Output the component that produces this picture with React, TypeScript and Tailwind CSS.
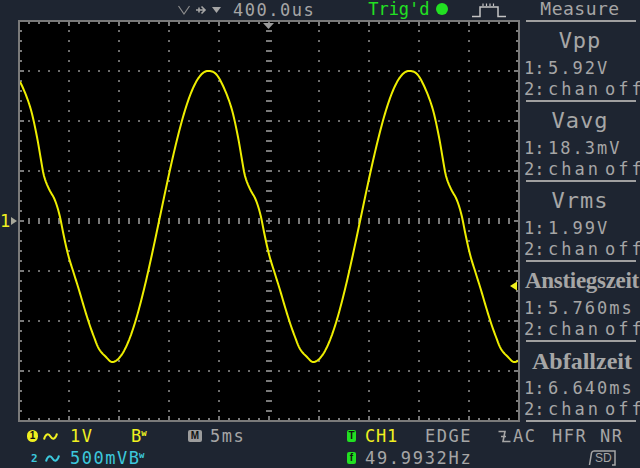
const YEL = "#f0f020";
const CYAN = "#3cc8dc";
const GREEN = "#22e022";

// falling edge of one period, screen coords (x, y)
const FALL: [number, number][] = [
  [208, 71], [216, 74], [224, 88], [232, 110], [238, 137], [242, 160], [245, 176],
  [250, 189], [255, 198], [258, 206], [261, 217], [264, 232], [267, 246], [270, 258],
  [275, 274], [280, 290], [285, 307], [290, 323], [295, 337], [300, 349], [307, 357], [313, 362],
];

function wave(x: number) {
  const P = 201;
  const t = (((x - 112) % P) + P) % P + 112;
  if (t <= 208) return 216.5 + 145.5 * Math.cos((Math.PI * (t - 112)) / 96);
  let i = 0;
  while (i < FALL.length - 2 && FALL[i + 1][0] < t) i++;
  const p0 = FALL[Math.max(i - 1, 0)];
  const p1 = FALL[i];
  const p2 = FALL[i + 1];
  const p3 = FALL[Math.min(i + 2, FALL.length - 1)];
  const dx = p2[0] - p1[0];
  const u = (t - p1[0]) / dx;
  const m1 = i === 0 ? 0 : ((p2[1] - p0[1]) / (p2[0] - p0[0])) * dx;
  const m2 = i + 1 === FALL.length - 1 ? 0 : ((p3[1] - p1[1]) / (p3[0] - p1[0])) * dx;
  const u2 = u * u;
  const u3 = u2 * u;
  return (2 * u3 - 3 * u2 + 1) * p1[1] + (u3 - 2 * u2 + u) * m1 + (-2 * u3 + 3 * u2) * p2[1] + (u3 - u2) * m2;
}

function tracePath() {
  const pts: string[] = [];
  for (let x = 20; x <= 519; x += 1) {
    pts.push(`${(x - 20).toFixed(1)},${(wave(x) - 22).toFixed(1)}`);
  }
  return "M" + pts.join(" L");
}

function Plot() {
  const W = 498;
  const H = 398;
  const items: JSX.Element[] = [];
  let k = 0;
  // dotted grid
  for (let gx = 49; gx < W; gx += 50) {
    if (gx === 249) continue;
    for (let y = 9; y < H; y += 10) items.push(<rect key={k++} x={gx - 1} y={y - 1} width="2" height="2" fill="#6e6e6e" />);
  }
  for (let gy = 49; gy < H; gy += 50) {
    if (gy === 199) continue;
    for (let x = 9; x < W; x += 10) {
      if ((x - 49) % 50 === 0) continue;
      items.push(<rect key={k++} x={x - 1} y={gy - 1} width="2" height="2" fill="#6e6e6e" />);
    }
  }
  // centre crosshair
  for (let y = 9; y < H; y += 10) items.push(<rect key={k++} x={246} y={y - 1} width="6" height="2" fill="#7a7a7a" />);
  for (let x = 9; x < W; x += 10) items.push(<rect key={k++} x={x - 1} y={196} width="2" height="6" fill="#7a7a7a" />);
  // border ticks
  for (let x = 9; x < W; x += 10) {
    const l = (x - 49) % 50 === 0 ? 4 : 2;
    items.push(<rect key={k++} x={x - 1} y={0} width="2" height={l} fill="#7a7a7a" />);
    items.push(<rect key={k++} x={x - 1} y={H - l} width="2" height={l} fill="#7a7a7a" />);
  }
  for (let y = 9; y < H; y += 10) {
    const l = (y - 49) % 50 === 0 ? 4 : 2;
    items.push(<rect key={k++} x={0} y={y - 1} width={l} height="2" fill="#7a7a7a" />);
    items.push(<rect key={k++} x={W - l} y={y - 1} width={l} height="2" fill="#7a7a7a" />);
  }

  return (
    <div className="w-[502px] h-[402px] border-2 border-[#7a7a7a] bg-black shrink-0">
      <svg width={W} height={H} viewBox={`0 0 ${W} ${H}`} className="block">
        {items}
        <polygon points="243,1 254,1 248.5,7" fill="#9a9a9a" />
        <path d={tracePath()} fill="none" stroke="#eeee00" strokeWidth="2" strokeLinejoin="round" />
        <polygon points="490,264 497,259.5 497,268.5" fill={YEL} />
      </svg>
    </div>
  );
}

function Gutter() {
  return (
    <div className="w-[18px] shrink-0 pt-[193px]">
      <div className="flex items-center h-[16px]">
        <span className="text-[#f0f020] leading-[16px]">1</span>
        <svg width="6" height="8" viewBox="0 0 6 8" className="ml-[1px]">
          <polygon points="0,0 6,4 0,8" fill="#a8a89a" />
        </svg>
      </div>
    </div>
  );
}

function TopBar() {
  return (
    <div className="h-[20px] flex items-center shrink-0">
      <svg width="44" height="12" viewBox="0 0 44 12" className="ml-[178px] shrink-0">
        <path d="M0.5 2 L6 10 L11.5 2" fill="none" stroke="#8c8c8c" strokeWidth="1.2" />
        <path d="M18 6 H27 M23.5 2.5 L27 6 L23.5 9.5 M21 3.5 V8.5" fill="none" stroke="#a6a6a6" strokeWidth="1.6" />
        <polygon points="34,3 43,3 38.5,9" fill="#a6a6a6" />
      </svg>
      <span className="ml-[11px] tracking-[1.5px] leading-[20px]">400.0us</span>
      <span className="ml-[53px] text-[#22e022] leading-[20px] -mt-[3px]">Trig'd</span>
      <span className="ml-[6px] w-[12px] h-[12px] rounded-full bg-[#22e022] -mt-[2px] shrink-0" />
      <svg width="34" height="15" viewBox="0 0 34 15" className="ml-[24px] shrink-0">
        <path d="M0 13.5 H8 V4 H26 V13.5 H34" fill="none" stroke="#c4c4c4" strokeWidth="1.5" />
        <path d="M11 0.5 V3 M14.5 0.5 V3 M18 0.5 V3 M21.5 0.5 V3" stroke="#c4c4c4" strokeWidth="1.2" />
      </svg>
    </div>
  );
}

function Sep() {
  return <div className="h-[2px] ml-[6px] mr-[4px] bg-[#a0a0a0] shrink-0" />;
}

function Block({ title, value, serif }: { title: string; value: string; serif?: string }) {
  return (
    <div className="h-[80px] flex flex-col shrink-0">
      <Sep />
      {serif ? (
        <div className={`mt-[8px] h-[22px] leading-[22px] pl-[4px] text-center whitespace-nowrap font-['Liberation_Serif',serif] font-bold ${serif}`}>
          {title}
        </div>
      ) : (
        <div className="mt-[8px] h-[22px] leading-[22px] text-center text-[22px] tracking-[1px]">{title}</div>
      )}
      <div className="mt-[6px] h-[21px] leading-[21px] pl-[4px] flex whitespace-nowrap">
        <span className="w-[24px] shrink-0">1:</span>
        <span className="tracking-[2px]">{value}</span>
      </div>
      <div className="h-[21px] leading-[21px] pl-[4px] flex whitespace-nowrap">
        <span className="w-[24px] shrink-0">2:</span>
        <span className="tracking-[3px]">chan</span>
        <span className="ml-[4px] tracking-[3px]">off</span>
      </div>
    </div>
  );
}

function MeasurePanel() {
  return (
    <div className="w-[120px] flex flex-col overflow-hidden shrink-0">
      <div className="h-[20px] leading-[18px] text-center text-[18px] tracking-[0.5px] shrink-0 whitespace-nowrap">Measure</div>
      <Block title="Vpp" value="5.92V" />
      <Block title="Vavg" value="18.3mV" />
      <Block title="Vrms" value="1.99V" />
      <Block title="Anstiegszeit" value="5.760ms" serif="text-[23px] tracking-[-0.3px]" />
      <Block title="Abfallzeit" value="6.640ms" serif="text-[24px]" />
      <Sep />
    </div>
  );
}

function Tilde({ color }: { color: string }) {
  return (
    <svg width="15" height="9" viewBox="0 0 15 9" className="shrink-0">
      <path d="M1 7.5 C2.5 1.5 5.5 1 7.5 4.5 C9.5 8 12.5 7.5 14 1.5" fill="none" stroke={color} strokeWidth="2" />
    </svg>
  );
}

function Bw({ color, w }: { color: string; w: string }) {
  return (
    <span className={`flex items-start h-[20px] shrink-0 ${w}`} style={{ color }}>
      <span className="leading-[20px]">B</span>
      <span className="text-[9px] leading-none font-bold mt-[3px]">w</span>
    </span>
  );
}

function Badge({ bg, label, w, round }: { bg: string; label: string; w: string; round?: boolean }) {
  return (
    <span
      className={`${w} h-[12px] ${round ? "rounded-full" : "rounded-[2px]"} flex items-center justify-center shrink-0 text-[#111] text-[10px] leading-none font-bold font-['Liberation_Sans',sans-serif]`}
      style={{ background: bg }}
    >
      {label}
    </span>
  );
}

function EdgeIcon() {
  return (
    <svg width="13" height="13" viewBox="0 0 13 13" className="shrink-0">
      <path d="M0.5 1.5 H7 L5 11.5 H12.5 M3 6.5 H8" fill="none" stroke="#a6a6a6" strokeWidth="1.6" />
    </svg>
  );
}

function SdIcon() {
  return (
    <div className="relative w-[30px] h-[16px] shrink-0">
      <svg width="30" height="16" viewBox="0 0 30 16" className="absolute inset-0">
        <path d="M2.5 15 L4.5 3 Q5 1 7 1 H28 V15 H25" fill="none" stroke="#a6a6a6" strokeWidth="1.5" />
      </svg>
      <span className="absolute left-[8px] top-[2px] text-[12px] leading-[13px] font-['Liberation_Sans',sans-serif]">SD</span>
    </div>
  );
}

function BottomBar() {
  return (
    <div className="h-[46px] pt-[4px] flex flex-col gap-[2px]">
      <div className="flex items-center h-[20px]">
        <div className="w-[347px] flex items-center pl-[27px] shrink-0">
          <Badge bg={YEL} label="1" w="w-[11px]" round />
          <span className="ml-[5px] flex"><Tilde color={YEL} /></span>
          <span className="ml-[12px] w-[61px] tracking-[1.5px] shrink-0" style={{ color: YEL }}>1V</span>
          <Bw color={YEL} w="w-[57px]" />
          <Badge bg="#9c9c9c" label="M" w="w-[14px]" />
          <span className="ml-[8px] tracking-[1.5px]">5ms</span>
        </div>
        <Badge bg={GREEN} label="T" w="w-[9px]" />
        <span className="ml-[9px] w-[60px] tracking-[0.8px] shrink-0" style={{ color: YEL }}>CH1</span>
        <span className="w-[73px] tracking-[1.5px] shrink-0">EDGE</span>
        <EdgeIcon />
        <span className="ml-[2px] w-[39px] tracking-[1.5px] shrink-0">AC</span>
        <span className="w-[48px] tracking-[1.5px] shrink-0">HFR</span>
        <span className="tracking-[1.5px]">NR</span>
      </div>
      <div className="flex items-center h-[20px]">
        <div className="w-[347px] flex items-center pl-[31px] shrink-0" style={{ color: CYAN }}>
          <span className="w-[12px] text-[11px] leading-none font-bold shrink-0">2</span>
          <span className="ml-[2px] flex"><Tilde color={CYAN} /></span>
          <span className="ml-[10px] tracking-[1.5px]">500mV</span>
          <Bw color={CYAN} w="w-[20px]" />
        </div>
        <Badge bg={GREEN} label="f" w="w-[9px]" />
        <span className="ml-[9px] w-[222px] tracking-[1.7px] shrink-0">49.9932Hz</span>
        <SdIcon />
      </div>
    </div>
  );
}

export default function App() {
  return (
    <div className="w-[640px] h-[468px] bg-[#1e2531] overflow-hidden font-['DejaVu_Sans_Mono',monospace] text-[#a6a6a6] text-[17px] leading-[20px]">
      <div className="flex h-[422px]">
        <div className="w-[520px] flex flex-col shrink-0">
          <TopBar />
          <div className="flex h-[402px]">
            <Gutter />
            <Plot />
          </div>
        </div>
        <MeasurePanel />
      </div>
      <BottomBar />
    </div>
  );
}
